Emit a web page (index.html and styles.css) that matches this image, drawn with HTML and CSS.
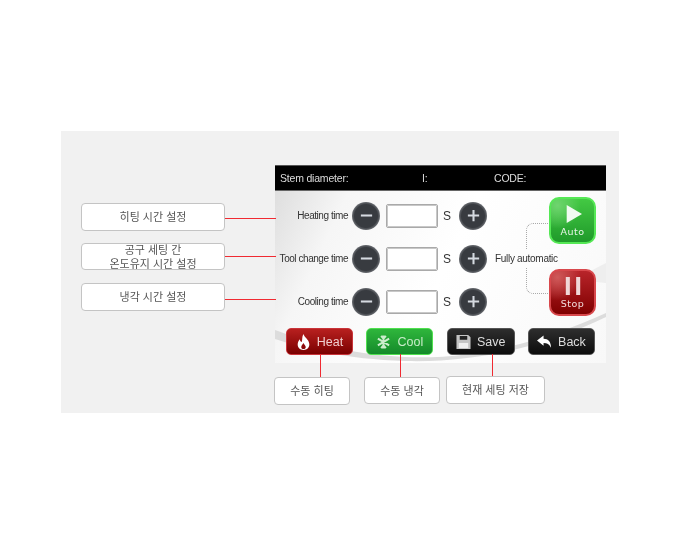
FILE: index.html
```html
<!DOCTYPE html>
<html lang="ko">

<head>
  <meta charset="UTF-8">
  <meta name="viewport" content="width=device-width, initial-scale=1.0">
  <title>Heating settings</title>
  <link rel="stylesheet" href="styles.css">
</head>

<body>
  <div class="figure">
    <div class="device">
      <div class="topbar">
        <span class="topbar-stem">Stem diameter:</span>
        <span class="topbar-i">I:</span>
        <span>CODE:</span>
      </div>
      <div class="screen">
        <!-- background swoosh of the touch panel -->
        <svg class="swoosh" viewBox="0 0 331 172" preserveAspectRatio="none">
          <path d="M0 139 C30 150 70 163 130 166 C200 169 270 150 331 122 L331 126 C270 156 200 172 130 170 C70 168 30 158 0 148Z" fill="#dcdcdc" />
          <path d="M300 88 L331 72 L331 92 L312 90Z" fill="#eeeeee" />
        </svg>

        <div class="settings">
          <div class="row">
            <span class="row-label">Heating time</span>
            <button class="round"><svg viewBox="0 0 16 16"><path d="M2 8h12" /></svg></button>
            <input class="value" type="text">
            <span class="unit">S</span>
            <button class="round"><svg viewBox="0 0 16 16"><path d="M2 8h12M8 2v12" /></svg></button>
          </div>
          <div class="row">
            <span class="row-label">Tool change time</span>
            <button class="round"><svg viewBox="0 0 16 16"><path d="M2 8h12" /></svg></button>
            <input class="value" type="text">
            <span class="unit">S</span>
            <button class="round"><svg viewBox="0 0 16 16"><path d="M2 8h12M8 2v12" /></svg></button>
          </div>
          <div class="row">
            <span class="row-label">Cooling time</span>
            <button class="round"><svg viewBox="0 0 16 16"><path d="M2 8h12" /></svg></button>
            <input class="value" type="text">
            <span class="unit">S</span>
            <button class="round"><svg viewBox="0 0 16 16"><path d="M2 8h12M8 2v12" /></svg></button>
          </div>
        </div>

        <div class="mode">
          <div class="bracket"></div>
          <span class="mode-label">Fully automatic</span>
          <button class="big big-auto">
            <svg viewBox="0 0 20 20"><path d="M3 0 L20 10 L3 20Z" fill="#f2fbf2" /></svg>
            Auto
          </button>
          <button class="big big-stop">
            <svg viewBox="0 0 20 20"><path d="M2 0h4.500v20h-4.500zM13.500 0h4.500v20h-4.500z" fill="#f0d8d8" /></svg>
            Stop
          </button>
        </div>

        <div class="actions">
          <button class="action action-heat">
            <svg viewBox="0 0 16 18"><path d="M8 0 C9 4 14 6 14.500 11 C15 15 12 18 8 18 C4 18 1 15 1.500 11 C1.800 8.500 3 7 4 6 C4 8 5 9 6 9 C7 6 6 3 8 0Z M8 10 C7 12 5.500 12.500 5.500 14.500 C5.500 16 6.500 16.800 8 16.800 C9.500 16.800 10.500 16 10.500 14.500 C10.500 12.500 8.500 12 8 10Z" fill="#fff" fill-rule="evenodd" /></svg>
            Heat
          </button>
          <button class="action action-cool">
            <svg viewBox="0 0 16 16"><path d="M8 1v14M2 4.500l12 7M14 4.500l-12 7M5.500 1.500l2.500 3 2.500-3M5.500 14.500l2.500-3 2.500 3" stroke="#cdeccd" stroke-width="2.200" fill="none" /></svg>
            Cool
          </button>
          <button class="action action-dark action-save">
            <svg viewBox="0 0 16 16"><path d="M0.500 0.500h12.500l2.500 2.500v12.500h-15z M4 1.500v4h8v-4z" fill="#c4c4c4" fill-rule="evenodd" /><path d="M3 9h10v5.500h-10z" fill="#efefef" /></svg>
            Save
          </button>
          <button class="action action-dark">
            <svg viewBox="0 0 16 14"><path d="M0 5.500 L7 0 V3.500 C12 3.500 15 7 15 13 C13 9.500 11 8 7 8 V11Z" fill="#fff" /></svg>
            Back
          </button>
        </div>
      </div>
    </div>

    <!-- callouts, placed over the figure -->
    <div class="line line-h line-heating"></div>
    <div class="line line-h line-tool"></div>
    <div class="line line-h line-cooling"></div>
    <div class="line line-v line-heat"></div>
    <div class="line line-v line-cool"></div>
    <div class="line line-v line-save"></div>

    <div class="note note-heating">히팅 시간 설정</div>
    <div class="note note-tool">공구 세팅 간<br>온도유지 시간 설정</div>
    <div class="note note-cooling">냉각 시간 설정</div>
    <div class="note note-heat">수동 히팅</div>
    <div class="note note-cool">수동 냉각</div>
    <div class="note note-save">현재 세팅 저장</div>
  </div>
</body>

</html>
```

FILE: styles.css
```css
* {
  box-sizing: border-box;
}

body {
  margin: 0;
  height: 543px;
  background-color: #fff;
  font-family: "Liberation Sans", "Noto Sans CJK KR", sans-serif;
  overflow: hidden;
}

.figure {
  position: relative;
  width: 558px;
  height: 282px;
  margin: 131px 0 0 61px;
  padding: 34px 0 0 214px;
  background-color: #f1f1f1;
  filter: blur(0.5px);
}

.device {
  width: 331px;
  height: 198px;
}

.topbar {
  display: flex;
  align-items: center;
  height: 26px;
  padding-left: 5px;
  background-color: #000;
  border-top: 1px solid #555;
  border-bottom: 1px solid #666;
  color: #ddd;
  font-size: 10.5px;
  letter-spacing: -0.2px;
}

.topbar-stem {
  width: 142px;
}

.topbar-i {
  width: 72px;
}

.screen {
  position: relative;
  height: 172px;
  padding-top: 3px;
  background-image: linear-gradient(115deg, #dedede 0%, #f6f6f6 18%, #fff 50%, #f8f8f8 100%);
}

.swoosh {
  position: absolute;
  left: 0;
  top: 0;
  width: 100%;
  height: 100%;
}

.settings {
  position: relative;
}

.row {
  display: flex;
  align-items: center;
  height: 43px;
}

.row-label {
  width: 73px;
  margin-right: 4px;
  color: #333;
  font-size: 10px;
  letter-spacing: -0.45px;
  text-align: right;
  white-space: nowrap;
}

.round {
  display: flex;
  align-items: center;
  justify-content: center;
  width: 28px;
  height: 28px;
  padding: 0;
  border: 0;
  border-radius: 50%;
  background-image: radial-gradient(circle, #383b40 0%, #383b40 58%, #787b80 74%, #48484a 100%);
}

.round svg {
  width: 15px;
  height: 15px;
  fill: none;
  stroke: #d5dae0;
  stroke-width: 2.200;
}

.value {
  width: 52px;
  height: 24px;
  margin-left: 6px;
  padding: 0;
  border: 1px solid #a9a9a9;
  outline: 1px solid #c8c8c8;
  outline-offset: -2px;
  border-radius: 2px;
  background-color: #fff;
}

.unit {
  width: 21px;
  padding-left: 5px;
  color: #333;
  font-size: 12px;
}

.mode {
  position: absolute;
  left: 220px;
  top: 0;
  width: 111px;
  height: 130px;
}

.bracket {
  position: absolute;
  left: 31px;
  top: 32px;
  width: 24px;
  height: 71px;
  border: 1px dotted #aaa;
  border-right: 0;
  border-radius: 7px 0 0 7px;
}

.mode-label {
  position: absolute;
  left: 0;
  top: 59px;
  padding: 3px 0;
  background-color: #fdfdfd;
  color: #333;
  font-size: 10px;
  letter-spacing: -0.3px;
  white-space: nowrap;
}

.big {
  position: absolute;
  left: 54px;
  display: flex;
  flex-direction: column;
  align-items: center;
  width: 47px;
  height: 47px;
  padding: 0;
  border-radius: 10px;
  color: #e8f5e8;
  font-family: "DejaVu Sans", sans-serif;
  font-size: 9.500px;
  letter-spacing: 0.5px;
}

.big svg {
  width: 18px;
  height: 18px;
  margin: 6px 0 3px;
}

.big-auto {
  top: 6px;
  border: 2px solid #55e855;
  background-image: radial-gradient(circle at 15% 15%, #6fd56f 0%, transparent 45%), linear-gradient(#43c943, #1f9a2a);
}

.big-stop {
  top: 78px;
  border: 2px solid #d8484c;
  background-image: radial-gradient(circle at 15% 15%, #cf5a5a 0%, transparent 45%), linear-gradient(#b8242a, #7f0000);
  color: #f3dede;
}

.actions {
  position: absolute;
  left: 11px;
  top: 137px;
  display: flex;
  justify-content: space-between;
  width: 309px;
}

.action {
  display: flex;
  align-items: center;
  justify-content: center;
  gap: 6px;
  width: 67px;
  height: 27px;
  padding: 0;
  border-radius: 5px;
  font-family: "Liberation Sans", sans-serif;
  font-size: 12.500px;
}

.action svg {
  width: 15px;
  height: 16px;
}

.action-save {
  width: 68px;
}

.action-heat {
  border: 1px solid #c9343a;
  background-image: linear-gradient(#b8201f, #7a0000);
  color: #f0d0d0;
}

.action-cool {
  border: 1px solid #4fe04f;
  background-image: linear-gradient(#2fb63c, #148a2a);
  color: #c8ecc8;
}

.action-dark {
  border: 1px solid #555;
  background-image: linear-gradient(#2e2e2e, #0c0c0c);
  color: #ddd;
}

.note {
  position: absolute;
  display: flex;
  align-items: center;
  justify-content: center;
  border: 1px solid #c4c4c4;
  border-radius: 4px;
  background-color: #fff;
  color: #555;
  font-size: 11px;
  line-height: 14px;
  text-align: center;
}

.note-heating {
  left: 20px;
  top: 72px;
  width: 144px;
  height: 28px;
}

.note-tool {
  left: 20px;
  top: 112px;
  width: 144px;
  height: 27px;
}

.note-cooling {
  left: 20px;
  top: 152px;
  width: 144px;
  height: 28px;
}

.note-heat {
  left: 213px;
  top: 246px;
  width: 76px;
  height: 28px;
}

.note-cool {
  left: 303px;
  top: 246px;
  width: 76px;
  height: 27px;
}

.note-save {
  left: 385px;
  top: 245px;
  width: 99px;
  height: 28px;
}

.line {
  position: absolute;
  background-color: #f02a32;
}

.line-h {
  left: 164px;
  width: 51px;
  height: 1px;
}

.line-v {
  top: 223px;
  width: 1px;
  height: 24px;
}

.line-heating {
  top: 87px;
}

.line-tool {
  top: 125px;
}

.line-cooling {
  top: 168px;
}

.line-heat {
  left: 259px;
}

.line-cool {
  left: 339px;
}

.line-save {
  left: 431px;
}
```
